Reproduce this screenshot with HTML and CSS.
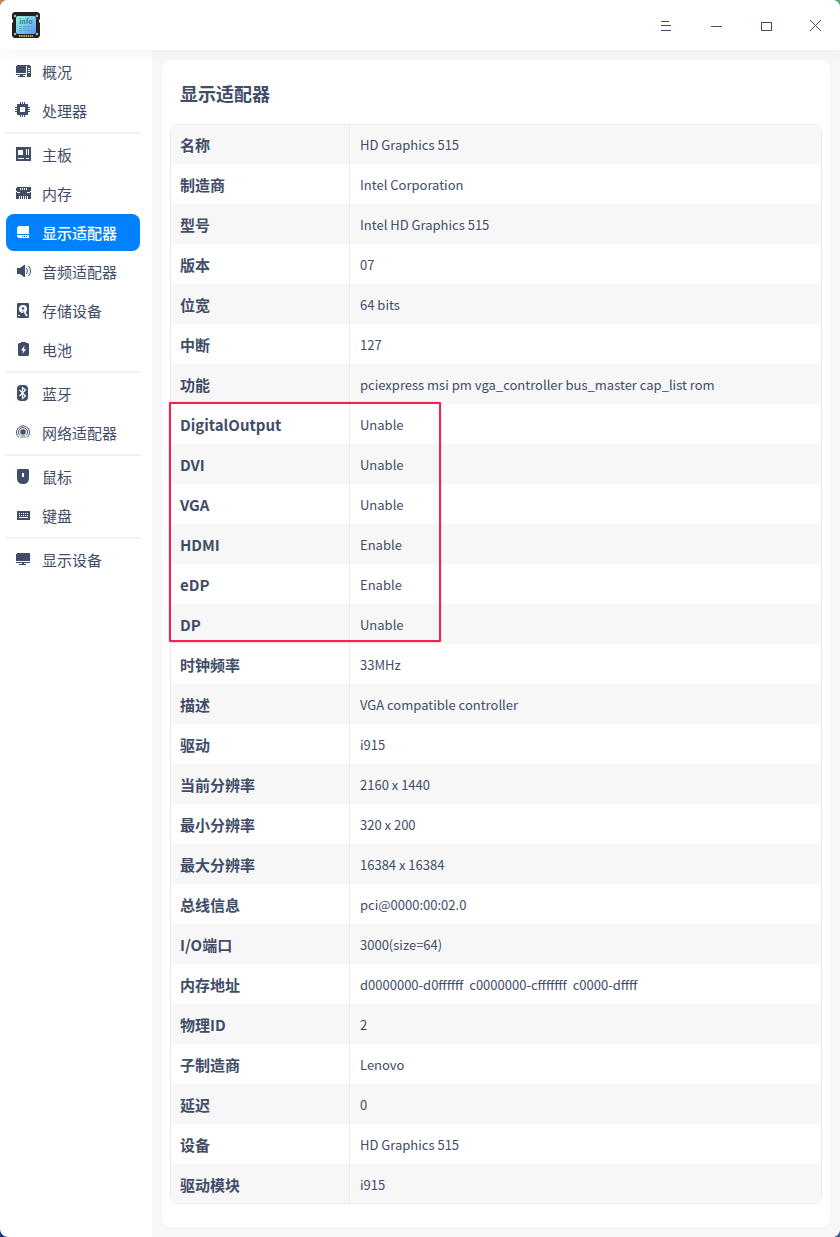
FILE: index.html
```html
<!DOCTYPE html>
<html lang="zh-CN">
<head>
  <meta charset="UTF-8">
  <meta name="viewport" content="width=device-width, initial-scale=1.0">
  <title>显示适配器</title>
  <link rel="stylesheet" href="styles.css">
</head>
<body>
  <div class="window">

    <!-- Title bar -->
    <header class="titlebar">
      <svg class="app-icon" viewBox="0 0 28 27" aria-hidden="true">
        <defs>
          <linearGradient id="chip" x1="0" y1="0" x2="1" y2="1">
            <stop offset="0" stop-color="#8ff5d2"/>
            <stop offset="0.5" stop-color="#7cc8ee"/>
            <stop offset="1" stop-color="#5c92fb"/>
          </linearGradient>
        </defs>
        <path d="M2 0H26L28 2V7L27 8V10L28 11V24L26 26H2L0 24V11L1 10V8L0 7V2Z" fill="#222"/>
        <rect x="4" y="4" width="20" height="18" rx="2" fill="url(#chip)"/>
        <g fill="#b5b5b5">
          <circle cx="3" cy="4" r="1.2"/><circle cx="25" cy="4" r="1.2"/>
          <circle cx="3" cy="22" r="1.2"/><circle cx="25" cy="22" r="1.2"/>
        </g>
        <path d="M7 24H21" stroke="#e0b536" stroke-width="2" stroke-dasharray="1.4 0.8"/>
        <path d="M7 14.5H20M7 16.5H17M7 18.5H20" stroke="#4f8fae" stroke-width="0.6" stroke-dasharray="3 1"/>
        <text x="14" y="12" text-anchor="middle" class="app-icon-text">info</text>
      </svg>
      <div class="window-buttons">
        <button type="button" aria-label="菜单"><svg viewBox="0 0 14 14"><path d="M3 3.5H11M3 7.5H13M3 12.5H13"/></svg></button>
        <button type="button" aria-label="最小化"><svg viewBox="0 0 14 14"><path d="M3 8.5H14"/></svg></button>
        <button type="button" aria-label="最大化"><svg viewBox="0 0 14 14"><path d="M3.5 4.5H13.5V12.5H3.5Z"/></svg></button>
        <button type="button" aria-label="关闭"><svg viewBox="0 0 14 14"><path d="M2 2L13 13M13 2L2 13"/></svg></button>
      </div>
    </header>

    <div class="main">
      <!-- Sidebar -->
      <nav class="sidebar">
        <a href="#overview">
          <svg viewBox="0 0 17 17"><path d="M2 2H15V3H11V10H1V3ZM1 11H11V12H8V13H10V14H3V13H5V12H1Z"/><path fill-rule="evenodd" d="M12 3H15L16 4V14H12ZM13 5V6H15V5ZM13 7V8H15V7ZM13 9V10H15V9Z"/></svg>
          概况
        </a>
        <a href="#cpu">
          <svg viewBox="0 0 17 17"><rect x="2" y="2" width="11" height="11" rx="1"/><rect class="cut" x="5" y="5" width="5" height="5" rx="1"/><path d="M5 0h1v2H5zM7 0h1v2H7zM9 0h1v2H9zM5 13h1v2H5zM7 13h1v2H7zM9 13h1v2H9zM0 5h2v1H0zM0 7h2v1H0zM0 9h2v1H0zM13 5h2v1h-2zM13 7h2v1h-2zM13 9h2v1h-2z"/></svg>
          处理器
        </a>
        <hr>
        <a href="#board">
          <svg viewBox="0 0 17 17"><rect x="1" y="1" width="15" height="14" rx="1"/><path class="cut" d="M3 4h5v5H3zM11 3h1v6h-1zM13 3h1v6h-1zM3 12h6v1H3zM11 12h3v1h-3z"/></svg>
          主板
        </a>
        <a href="#memory">
          <svg viewBox="0 0 17 17"><path d="M2 2H15L16 3V14H1V3Z"/><path class="cut" d="M5 3h1v2H5zM7 3h1v2H7zM9 3h1v2H9zM11 3h1v2h-1zM1 6h1v1H1zM15 6h1v1h-1zM2 7h3v1H2zM12 7h3v1h-3zM4 11h1v3H4zM6 11h1v3H6zM8 11h1v3H8zM10 11h1v3h-1zM12 11h1v3h-1z"/></svg>
          内存
        </a>
        <a href="#display-adapter" class="active" aria-current="page">
          <svg viewBox="0 0 17 17"><path d="M3 2H13L14 3V10H2V3Z"/><path fill-rule="evenodd" d="M2 11H14V13L13 14H3L2 13ZM7 12V13H8V12ZM9 12V13H10V12ZM11 12V13H12V12Z"/></svg>
          显示适配器
        </a>
        <a href="#audio">
          <svg viewBox="0 0 17 17" class="smooth"><path d="M2 5H5L9 2H10V14H9L5 11H2Z"/><path class="line" d="M11.5 5Q13.5 8 11.5 11M13.5 3Q17.5 8 13.5 13"/></svg>
          音频适配器
        </a>
        <a href="#storage">
          <svg viewBox="0 0 17 17" class="smooth"><rect x="2" y="1" width="12" height="15" rx="1"/><circle cx="8" cy="7" r="4" class="cut"/><circle cx="8" cy="6.5" r="1.3"/><path d="M8 8L12 14" stroke="#fff" stroke-width="1.8"/><path d="M7.5 9L10 13" stroke="#414d68" stroke-width="0.8"/><path class="cut" d="M3 13h2v1H3z"/></svg>
          存储设备
        </a>
        <a href="#battery">
          <svg viewBox="0 0 17 17" class="smooth"><path d="M6 1H11V2H13L14 3V14L13 15H4L3 14V3L4 2H6Z"/><path class="cut" d="M9.5 4.5L6 9.5H8L7.5 13L11 8H9Z"/></svg>
          电池
        </a>
        <hr>
        <a href="#bluetooth">
          <svg viewBox="0 0 17 17" class="smooth"><rect x="2" y="0" width="11" height="16" rx="4"/><path d="M4.5 5L10.5 11L7.5 13.5V2.5L10.5 5L4.5 11" fill="none" stroke="#fff" stroke-width="1.2"/></svg>
          蓝牙
        </a>
        <a href="#network">
          <svg viewBox="0 0 17 17" class="smooth"><circle cx="8" cy="8" r="2.8"/><path class="line" d="M5 11.5A4.5 4.5 0 1 1 11 11.5M4 13.5A6.5 6.5 0 1 1 12 13.5"/><path d="M6 11H10L11 14H5Z" class="pale"/></svg>
          网络适配器
        </a>
        <hr>
        <a href="#mouse">
          <svg viewBox="0 0 17 17" class="smooth"><path d="M3 1H13L14 2V10Q14 16 8 16Q2 16 2 10V2Z"/><path class="cut" d="M7 5h2v4H7z"/></svg>
          鼠标
        </a>
        <a href="#keyboard">
          <svg viewBox="0 0 17 17"><rect x="2" y="4" width="13" height="9"/><path class="cut" d="M4 6h1v1H4zM6 6h1v1H6zM8 6h1v1H8zM10 6h1v1h-1zM12 6h1v1h-1zM4 8h1v1H4zM6 8h1v1H6zM8 8h1v1H8zM10 8h1v1h-1zM12 8h1v1h-1zM4 10h9v1H4z"/></svg>
          键盘
        </a>
        <hr>
        <a href="#monitor">
          <svg viewBox="0 0 17 17"><path d="M2 2H14L15 3V10H1V3ZM1 11H15V12H9V13H11V14H4V13H7V12H1Z"/></svg>
          显示设备
        </a>
      </nav>

      <!-- Device details -->
      <main class="content">
        <section class="panel">
          <h1>显示适配器</h1>
          <div class="details">
            <table>
              <tbody>
                <tr><th scope="row">名称</th><td>HD Graphics 515</td></tr>
                <tr><th scope="row">制造商</th><td>Intel Corporation</td></tr>
                <tr><th scope="row">型号</th><td>Intel HD Graphics 515</td></tr>
                <tr><th scope="row">版本</th><td>07</td></tr>
                <tr><th scope="row">位宽</th><td>64 bits</td></tr>
                <tr><th scope="row">中断</th><td>127</td></tr>
                <tr><th scope="row">功能</th><td>pciexpress msi pm vga_controller bus_master cap_list rom</td></tr>
                <tr><th scope="row">DigitalOutput</th><td>Unable</td></tr>
                <tr><th scope="row">DVI</th><td>Unable</td></tr>
                <tr><th scope="row">VGA</th><td>Unable</td></tr>
                <tr><th scope="row">HDMI</th><td>Enable</td></tr>
                <tr><th scope="row">eDP</th><td>Enable</td></tr>
                <tr><th scope="row">DP</th><td>Unable</td></tr>
                <tr><th scope="row">时钟频率</th><td>33MHz</td></tr>
                <tr><th scope="row">描述</th><td>VGA compatible controller</td></tr>
                <tr><th scope="row">驱动</th><td>i915</td></tr>
                <tr><th scope="row">当前分辨率</th><td>2160 x 1440</td></tr>
                <tr><th scope="row">最小分辨率</th><td>320 x 200</td></tr>
                <tr><th scope="row">最大分辨率</th><td>16384 x 16384</td></tr>
                <tr><th scope="row">总线信息</th><td>pci@0000:00:02.0</td></tr>
                <tr><th scope="row">I/O端口</th><td>3000(size=64)</td></tr>
                <tr><th scope="row">内存地址</th><td>d0000000-d0ffffff&nbsp; c0000000-cfffffff&nbsp; c0000-dffff</td></tr>
                <tr><th scope="row">物理ID</th><td>2</td></tr>
                <tr><th scope="row">子制造商</th><td>Lenovo</td></tr>
                <tr><th scope="row">延迟</th><td>0</td></tr>
                <tr><th scope="row">设备</th><td>HD Graphics 515</td></tr>
                <tr><th scope="row">驱动模块</th><td>i915</td></tr>
              </tbody>
            </table>
            <div class="highlight"></div>
          </div>
        </section>
      </main>
    </div>
  </div>
</body>
</html>
```

FILE: styles.css
```css
* {
  box-sizing: border-box;
}
body {
  margin: 0;
  font-family: "Noto Sans CJK SC", "Noto Sans", sans-serif;
  color: #414d68;
  background:
    linear-gradient(#c08850, #c08850) left top / 20px 20px no-repeat,
    linear-gradient(#5fa878, #5fa878) right top / 20px 20px no-repeat,
    linear-gradient(#1c3080, #1c3080) left bottom / 20px 20px no-repeat,
    linear-gradient(#3a6090, #3a6090) right bottom / 20px 20px no-repeat;
}
.window {
  display: flex;
  flex-direction: column;
  min-height: 100vh;
  border-radius: 8px;
  overflow: hidden;
  background: #fff;
}

/* Title bar */
.titlebar {
  position: relative;
  z-index: 1;
  display: flex;
  align-items: center;
  justify-content: space-between;
  height: 50px;
  padding-left: 12px;
  background: #fff;
  box-shadow: 0 0 20px rgba(0, 0, 0, 0.06);
}
.app-icon {
  width: 28px;
  height: 27px;
}
.app-icon-text {
  font-size: 7px;
  font-weight: bold;
  fill: #3f8391;
}
.window-buttons {
  display: flex;
}
.window-buttons button {
  display: flex;
  align-items: center;
  justify-content: center;
  width: 50px;
  height: 50px;
  padding: 0;
  border: none;
  background: none;
  cursor: pointer;
}
.window-buttons svg {
  width: 14px;
  height: 14px;
  fill: none;
  stroke: #414d68;
  shape-rendering: crispEdges;
}
.window-buttons button:hover {
  background: #f2f2f2;
}

.main {
  display: flex;
  flex: 1;
}

/* Sidebar */
.sidebar {
  display: flex;
  flex-direction: column;
  flex: none;
  gap: 2px;
  width: 152px;
  padding: 3px 12px 10px 6px;
}
.sidebar a {
  display: flex;
  align-items: center;
  gap: 10px;
  height: 37px;
  padding-left: 9px;
  border-radius: 8px;
  font-size: 15px;
  line-height: 37px;
  color: #414d68;
  text-decoration: none;
  white-space: nowrap;
}
.sidebar a.active {
  background: #0081ff;
  color: #fff;
  font-weight: 500;
}
.sidebar hr {
  width: 136px;
  height: 2px;
  margin: 1px -1px 0;
  border: none;
  background: #f2f2f2;
}
.sidebar svg {
  flex: none;
  width: 17px;
  height: 17px;
  fill: currentColor;
  shape-rendering: crispEdges;
}
.sidebar svg.smooth {
  shape-rendering: auto;
}
.sidebar .cut {
  fill: #fff;
}
.sidebar .pale {
  opacity: 0.4;
}
.sidebar .line {
  fill: none;
  stroke: currentColor;
}

/* Details */
.content {
  flex: 1;
  min-width: 0;
  padding: 10px;
  background: #f7f7f7;
}
.panel {
  height: 100%;
  padding: 0 8px 23px;
  border-radius: 8px;
  background: #fff;
}
h1 {
  margin: 0;
  padding: 2px 10px 0;
  font-size: 18px;
  font-weight: 700;
  line-height: 62px;
}
.details {
  position: relative;
}
table {
  width: 100%;
  border: 1px solid #ebebeb;
  border-radius: 8px;
  border-spacing: 0;
  table-layout: fixed;
  overflow: hidden;
}
th, td {
  height: 40px;
  padding: 2px 10px 0;
  line-height: 20px;
  text-align: left;
}
th {
  width: 179px;
  padding-left: 9px;
  border-right: 1px solid #ededed;
  font-size: 15px;
  font-weight: 700;
}
td {
  font-size: 13px;
}
/* the table border takes one pixel from the outer rows */
tr:first-child > *,
tr:last-child > * {
  height: 39px;
}
tr:first-child > * {
  padding-top: 0;
}
tr:nth-child(odd) {
  background: #f7f7f7;
}

/* Frame around the output ports, rows 8 to 13 */
.highlight {
  position: absolute;
  top: 278px;
  left: -1px;
  width: 272px;
  height: 240px;
  border: 2px solid #f8204f;
  border-radius: 1px;
  box-shadow: 0 0 1px #f8204f;
  pointer-events: none;
}
```
